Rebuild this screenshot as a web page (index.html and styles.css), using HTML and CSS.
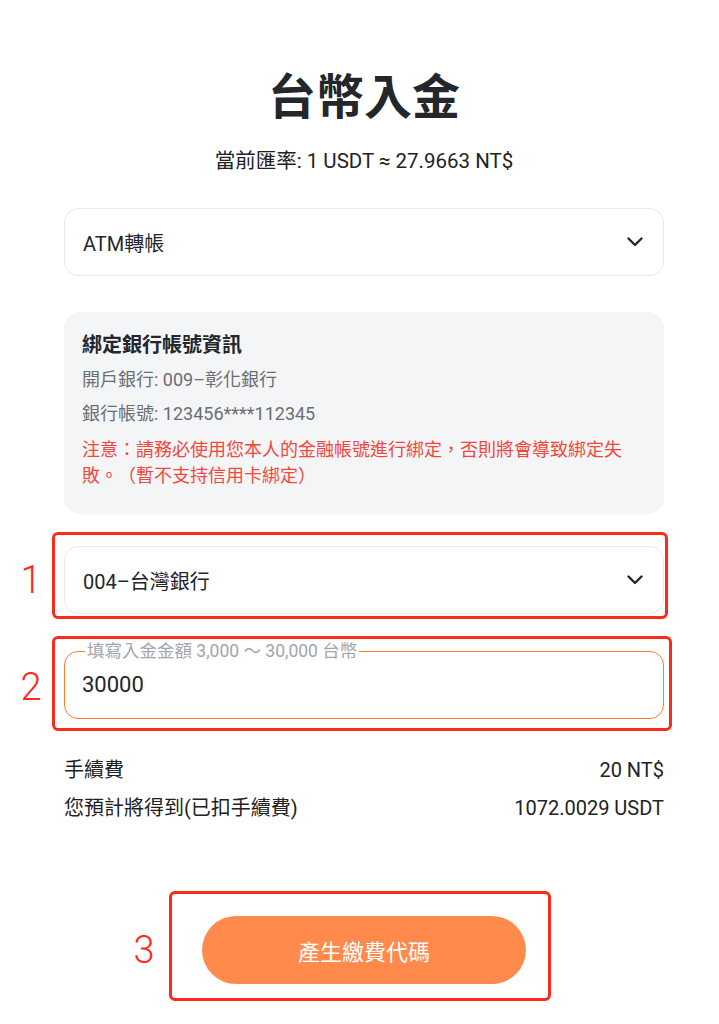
FILE: index.html
```html
<!DOCTYPE html>
<html lang="zh-Hant">
<head>
    <meta charset="UTF-8">
    <meta name="viewport" content="width=device-width, initial-scale=1.0">
    <title>台幣入金</title>
    <link rel="stylesheet" href="styles.css">
</head>
<body>
    <div class="page">
        <h1>台幣入金</h1>
        <p class="rate">當前匯率: 1 USDT ≈ 27.9663 NT$</p>

        <div class="select">
            <span>ATM轉帳</span>
            <svg class="chevron" viewBox="0 0 16 10" width="16" height="10"><path d="M1.5 1.5L8 8l6.5-6.5"/></svg>
        </div>

        <div class="card">
            <div class="card-title">綁定銀行帳號資訊</div>
            <div class="card-line">開戶銀行: 009–彰化銀行</div>
            <div class="card-line">銀行帳號: 123456****112345</div>
            <div class="card-note">注意：請務必使用您本人的金融帳號進行綁定，否則將會導致綁定失敗。（暫不支持信用卡綁定）</div>
        </div>

        <div class="marked marked-bank">
            <div class="select">
                <span>004–台灣銀行</span>
                <svg class="chevron" viewBox="0 0 16 10" width="16" height="10"><path d="M1.5 1.5L8 8l6.5-6.5"/></svg>
            </div>
            <div class="mark-frame"></div>
            <div class="mark-num">1</div>
        </div>

        <div class="marked marked-amount">
            <fieldset class="amount">
                <legend>填寫入金金額 3,000 ～ 30,000 台幣</legend>
                <input type="text" value="30000">
            </fieldset>
            <div class="mark-frame"></div>
            <div class="mark-num">2</div>
        </div>

        <div class="fees">
            <div class="fee-row"><span>手續費</span><span>20 NT$</span></div>
            <div class="fee-row"><span>您預計將得到(已扣手續費)</span><span>1072.0029 USDT</span></div>
        </div>

        <div class="submit-wrap">
            <div class="marked marked-submit">
                <button type="button">產生繳費代碼</button>
                <div class="mark-frame"></div>
                <div class="mark-num">3</div>
            </div>
        </div>
    </div>
</body>
</html>
```

FILE: styles.css
```css
body {
    margin: 0;
    background-color: #ffffff;
    color: #23262b;
    font-family: Roboto, 'Noto Sans CJK SC', sans-serif;
    text-spacing-trim: space-all;
}
.page {
    width: 600px;
    margin-left: 64px;
    padding: 70px 0 39px;
}
h1 {
    margin: 0;
    font-size: 48px;
    line-height: 56px;
    font-weight: 700;
    text-align: center;
    color: #23262b;
}
.rate {
    margin: 21px 0 0;
    font-size: 20.5px;
    line-height: 28px;
    text-align: center;
    color: #222;
}
.approx {
    font-size: 22px;
}
.select {
    box-sizing: border-box;
    height: 68px;
    margin-top: 33px;
    padding: 0 18px;
    display: flex;
    align-items: center;
    justify-content: space-between;
    border: 1px solid #e7e9ec;
    border-radius: 14px;
    background-color: #fff;
    font-size: 20px;
    color: #23262b;
}
.chevron {
    margin-right: 2px;
}
.chevron path {
    fill: none;
    stroke: #23262b;
    stroke-width: 2.4;
    stroke-linecap: round;
    stroke-linejoin: round;
}
/* bound bank info */
.card {
    margin-top: 36px;
    padding: 19px 18px 25px;
    background-color: #f4f5f7;
    border-radius: 16px;
}
.card-title {
    font-size: 20px;
    line-height: 28px;
    font-weight: 700;
    color: #23262b;
}
.card-line {
    margin-top: 8px;
    font-size: 18px;
    line-height: 26px;
    color: #6b6e73;
}
.card-line:first-of-type {
    margin-top: 9px;
}
.card-note {
    width: 548px;
    margin-top: 10px;
    font-size: 18px;
    line-height: 26px;
    color: #f5463b;
}
/* red annotation frames */
.marked {
    position: relative;
}
.mark-frame {
    position: absolute;
    border: 3px solid #fb2a1b;
    border-radius: 6px;
    pointer-events: none;
}
.mark-num {
    position: absolute;
    top: 50%;
    width: 30px;
    transform: translateY(-50%);
    text-align: center;
    font-size: 38px;
    font-weight: 300;
    line-height: 40px;
    color: #fb2a1b;
}
.marked-bank {
    margin-top: 32px;
}
.marked-bank .select {
    margin-top: 0;
}
.marked-bank .mark-frame {
    top: -14px;
    left: -12px;
    right: -4px;
    bottom: -5px;
}
.marked-bank .mark-num {
    left: -48px;
}
.marked-amount {
    margin-top: 28px;
}
.marked-amount .mark-frame {
    top: -6px;
    left: -12px;
    right: -8px;
    bottom: -12px;
}
.marked-amount .mark-num {
    left: -48px;
    top: 45px;
}
.amount {
    margin: 0;
    padding: 0 17px;
    border: 1px solid #ff7b31;
    border-radius: 14px;
}
.amount legend {
    margin-left: 3px;
    padding: 0 2px;
    font-size: 17.5px;
    line-height: 18px;
    color: #a2a5ab;
}
.amount input {
    display: block;
    width: 100%;
    height: 25px;
    padding: 12px 0 21px;
    border: none;
    outline: none;
    background: transparent;
    font-family: Roboto, 'Noto Sans CJK SC', sans-serif;
    font-size: 22px;
    color: #23262b;
}
.fees {
    margin-top: 32px;
}
.fee-row {
    display: flex;
    justify-content: space-between;
    font-size: 20px;
    line-height: 38px;
    color: #222;
}
.submit-wrap {
    margin-top: 89px;
    display: flex;
    justify-content: center;
}
.marked-submit .mark-frame {
    top: -25px;
    left: -33px;
    right: -25px;
    bottom: -17px;
}
.marked-submit .mark-num {
    left: -73px;
}
button {
    display: block;
    width: 324px;
    height: 68px;
    border: none;
    border-radius: 34px;
    background-color: #ff8a4c;
    color: #fff;
    font-family: Roboto, 'Noto Sans CJK SC', sans-serif;
    font-size: 22px;
    cursor: pointer;
}
```
